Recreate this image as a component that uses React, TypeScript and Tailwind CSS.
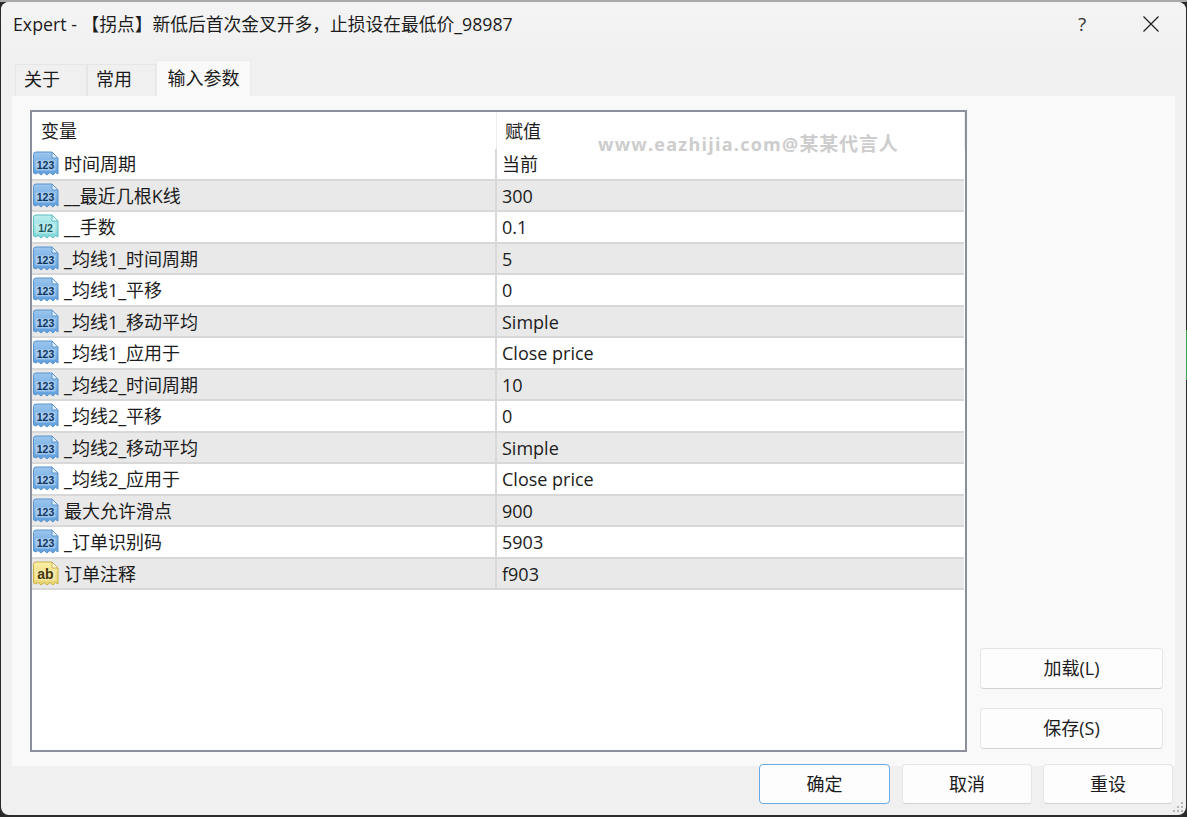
import React from "react";

type Kind = "num" | "dbl" | "str";

const rows: { name: string; value: string; kind: Kind }[] = [
  { name: "时间周期", value: "当前", kind: "num" },
  { name: "__最近几根K线", value: "300", kind: "num" },
  { name: "__手数", value: "0.1", kind: "dbl" },
  { name: "_均线1_时间周期", value: "5", kind: "num" },
  { name: "_均线1_平移", value: "0", kind: "num" },
  { name: "_均线1_移动平均", value: "Simple", kind: "num" },
  { name: "_均线1_应用于", value: "Close price", kind: "num" },
  { name: "_均线2_时间周期", value: "10", kind: "num" },
  { name: "_均线2_平移", value: "0", kind: "num" },
  { name: "_均线2_移动平均", value: "Simple", kind: "num" },
  { name: "_均线2_应用于", value: "Close price", kind: "num" },
  { name: "最大允许滑点", value: "900", kind: "num" },
  { name: "_订单识别码", value: "5903", kind: "num" },
  { name: "订单注释", value: "f903", kind: "str" },
];

const iconStyles: Record<Kind, { top: string; bottom: string; stroke: string; fold: string; ink: string; label: string }> = {
  num: { top: "#9cc6ee", bottom: "#5c9edd", stroke: "#5b93cc", fold: "#e3f0fb", ink: "#0f3560", label: "123" },
  dbl: { top: "#bdeeee", bottom: "#7ad6d8", stroke: "#5fbcc0", fold: "#ecfbfb", ink: "#1a555c", label: "1/2" },
  str: { top: "#fbf0a8", bottom: "#e8d268", stroke: "#c9b04c", fold: "#fffadf", ink: "#453906", label: "ab" },
};

const TypeIcon: React.FC<{ kind: Kind }> = ({ kind }) => {
  const s = iconStyles[kind];
  return (
    <svg width="26" height="26" viewBox="0 0 26 26" className="shrink-0 mt-[1px]">
      <defs>
        <linearGradient id={`fill-${kind}`} x1="0" y1="0" x2="0" y2="1">
          <stop offset="0" stopColor={s.top} />
          <stop offset="1" stopColor={s.bottom} />
        </linearGradient>
      </defs>
      <path
        d="M0.5 3.5a2.5 2.5 0 0 1 2.5-2.5h16l6 6v16l-2.5-1.5-2.5 2.5-3-2.5-3 2.5-3-2.5-3 2.5-3-2.5-2 1.5-2.5-1z"
        fill={`url(#fill-${kind})`}
        stroke={s.stroke}
      />
      <path d="M19 1v6h6z" fill={s.fold} stroke={s.stroke} />
      <rect x="2.5" y="9.5" width="20" height="10" rx="1" fill="#ffffff" fillOpacity="0.35" />
      <text
        x="12.5"
        y="18"
        textAnchor="middle"
        fontFamily="'Liberation Sans', sans-serif"
        fontWeight="700"
        fontSize={kind === "str" ? 14 : 10.5}
        fill={s.ink}
      >
        {s.label}
      </text>
    </svg>
  );
};

const Tab: React.FC<{ label: string; active?: boolean; className: string }> = ({ label, active, className }) => (
  <div
    className={
      active
        ? `flex items-start justify-center pt-[4px] h-[36px] bg-[#f9f9f9] border border-b-0 border-[#ebebeb] ${className}`
        : `flex items-center pl-[8px] pb-[2px] h-[32px] bg-[#f0f0f0] border border-b-0 border-[#e6e6e6] ${className}`
    }
  >
    {label}
  </div>
);

const Btn: React.FC<{ label: string; primary?: boolean; className: string }> = ({ label, primary, className }) => (
  <div
    className={`flex items-center justify-center rounded-[4px] bg-[#fdfdfd] text-[18px] text-[#1b1b1b] border ${
      primary ? "border-[#6aa9e4]" : "border-[#e5e5e5] border-b-[#d2d2d2]"
    } ${className}`}
  >
    {label}
  </div>
);

export default function App() {
  return (
    <div
      className="relative w-[1187px] h-[817px] overflow-hidden bg-[#2a2a2a] border-t-2 border-[#a9a9a9] pl-[1px] pr-[1px] pb-[2px] text-[18px] text-[#1c1c1c]"
      style={{ fontFamily: "'Open Sans', 'Noto Sans CJK SC', sans-serif" }}
    >
      <div className="relative w-full h-full rounded-[8px] overflow-hidden bg-[#f0f0f0] flex flex-col">
        <div className="h-[46px] shrink-0 flex items-center bg-gradient-to-b from-[#f4f4f4] to-[#f1f1f1] pl-[12px] pb-[2px]">
          <span className="flex-1 text-[17.75px] whitespace-nowrap">Expert - 【拐点】新低后首次金叉开多，止损设在最低价_98987</span>
          <span className="w-[20px] mr-[50px] text-center text-[19px] text-[#333]">?</span>
          <svg width="18" height="18" viewBox="0 0 18 18" className="mr-[26px]">
            <path d="M1.5 1.5l15 15M16.5 1.5l-15 15" stroke="#222" strokeWidth="1.3" fill="none" />
          </svg>
        </div>

        <div className="h-[48px] shrink-0 flex items-end pl-[14px]">
          <Tab label="关于" className="w-[72px]" />
          <Tab label="常用" className="w-[69px]" />
          <Tab label="输入参数" active className="w-[95px]" />
        </div>

        <div className="h-[670px] shrink-0 mx-[11px] bg-[#f9f9f9] flex pl-[18px] pt-[14px]">
          <div className="w-[937px] h-[642px] shrink-0 border-2 border-[#8b909c] bg-white">
            <div className="h-[37px] flex">
              <div className="w-[465px] pl-[9px] pt-[6px] border-r border-[#ececec]">变量</div>
              <div className="flex-1 pl-[8px] pt-[6px] border-r border-[#ececec]">赋值</div>
            </div>
            {rows.map((row, i) => (
              <div
                key={row.name}
                className={`h-[31.5px] mr-[1px] flex items-center border-b-2 border-[#d8d8d8] ${
                  i % 2 === 1 ? "bg-[#e9e9e9]" : "bg-white"
                }`}
              >
                <div className="w-[465px] h-full flex items-center pl-[1px] gap-[5px] border-r-2 border-[#d8d8d8] whitespace-nowrap">
                  <TypeIcon kind={row.kind} />
                  <span className="pt-[2px]">{row.name}</span>
                </div>
                <div className="pl-[5px] pt-[2px]">{row.value}</div>
              </div>
            ))}
          </div>
          <div className="flex-1 flex flex-col items-start pl-[13px] pt-[538px] gap-[19px]">
            <Btn label="加载(L)" className="w-[183px] h-[41px]" />
            <Btn label="保存(S)" className="w-[183px] h-[41px]" />
          </div>
        </div>

        <div className="flex-1 flex justify-end gap-[11px] pr-[13px] -mt-[2px]">
          <Btn label="确定" primary className="w-[131px] h-[40px] mr-[1px]" />
          <Btn label="取消" className="w-[130px] h-[40px]" />
          <Btn label="重设" className="w-[130px] h-[40px]" />
        </div>

        <div className="absolute left-[597px] top-[128px] text-[18px] font-bold tracking-[1.25px] text-[#cdcdcd] whitespace-nowrap">
          www.eazhijia.com@<span className="text-[19px] tracking-[0.8px]">某某代言人</span>
        </div>

        <svg width="14" height="14" viewBox="0 0 14 14" className="absolute right-[2px] bottom-[1px]">
          <path d="M11 2h2v2h-2zM7 6h2v2H7zM11 6h2v2h-2zM3 10h2v2H3zM7 10h2v2H7zM11 10h2v2h-2z" fill="#b5b5b5" />
        </svg>
      </div>
      <div className="absolute right-0 top-[328px] w-[1px] h-[50px] bg-[#3fa34d]" />
    </div>
  );
}
